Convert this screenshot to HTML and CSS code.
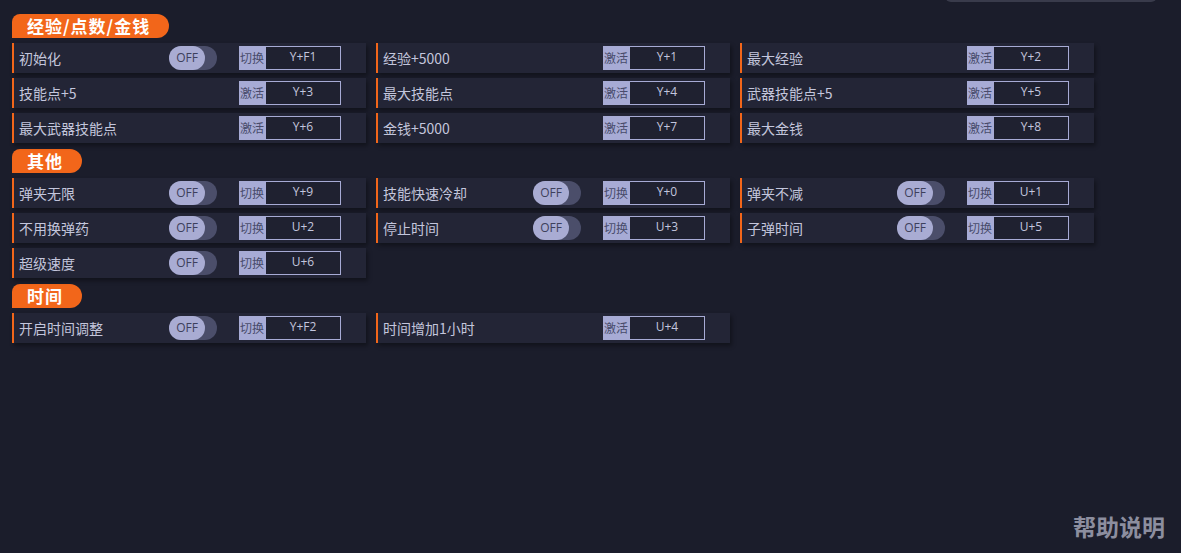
FILE: index.html
```html
<!DOCTYPE html>
<html lang="zh-CN">
<head>
  <meta charset="UTF-8" />
  <title>修改器</title>
  <link rel="stylesheet" href="styles.css">
</head>
<body>
  <div class="top-tab"></div>

  <div class="section">
    <div class="section-title">经验/点数/金钱</div>
    <div class="grid">
      <div class="row"><span class="name">初始化</span><span class="toggle"><span class="knob">OFF</span></span><span class="key"><span class="mode">切换</span><span class="hot">Y+F1</span></span></div>
      <div class="row"><span class="name">经验+5000</span><span class="key"><span class="mode">激活</span><span class="hot">Y+1</span></span></div>
      <div class="row"><span class="name">最大经验</span><span class="key"><span class="mode">激活</span><span class="hot">Y+2</span></span></div>
      <div class="row"><span class="name">技能点+5</span><span class="key"><span class="mode">激活</span><span class="hot">Y+3</span></span></div>
      <div class="row"><span class="name">最大技能点</span><span class="key"><span class="mode">激活</span><span class="hot">Y+4</span></span></div>
      <div class="row"><span class="name">武器技能点+5</span><span class="key"><span class="mode">激活</span><span class="hot">Y+5</span></span></div>
      <div class="row"><span class="name">最大武器技能点</span><span class="key"><span class="mode">激活</span><span class="hot">Y+6</span></span></div>
      <div class="row"><span class="name">金钱+5000</span><span class="key"><span class="mode">激活</span><span class="hot">Y+7</span></span></div>
      <div class="row"><span class="name">最大金钱</span><span class="key"><span class="mode">激活</span><span class="hot">Y+8</span></span></div>
    </div>
  </div>

  <div class="section">
    <div class="section-title">其他</div>
    <div class="grid">
      <div class="row"><span class="name">弹夹无限</span><span class="toggle"><span class="knob">OFF</span></span><span class="key"><span class="mode">切换</span><span class="hot">Y+9</span></span></div>
      <div class="row"><span class="name">技能快速冷却</span><span class="toggle"><span class="knob">OFF</span></span><span class="key"><span class="mode">切换</span><span class="hot">Y+0</span></span></div>
      <div class="row"><span class="name">弹夹不减</span><span class="toggle"><span class="knob">OFF</span></span><span class="key"><span class="mode">切换</span><span class="hot">U+1</span></span></div>
      <div class="row"><span class="name">不用换弹药</span><span class="toggle"><span class="knob">OFF</span></span><span class="key"><span class="mode">切换</span><span class="hot">U+2</span></span></div>
      <div class="row"><span class="name">停止时间</span><span class="toggle"><span class="knob">OFF</span></span><span class="key"><span class="mode">切换</span><span class="hot">U+3</span></span></div>
      <div class="row"><span class="name">子弹时间</span><span class="toggle"><span class="knob">OFF</span></span><span class="key"><span class="mode">切换</span><span class="hot">U+5</span></span></div>
      <div class="row"><span class="name">超级速度</span><span class="toggle"><span class="knob">OFF</span></span><span class="key"><span class="mode">切换</span><span class="hot">U+6</span></span></div>
    </div>
  </div>

  <div class="section">
    <div class="section-title">时间</div>
    <div class="grid">
      <div class="row"><span class="name">开启时间调整</span><span class="toggle"><span class="knob">OFF</span></span><span class="key"><span class="mode">切换</span><span class="hot">Y+F2</span></span></div>
      <div class="row"><span class="name">时间增加1小时</span><span class="key"><span class="mode">激活</span><span class="hot">U+4</span></span></div>
    </div>
  </div>

  <div class="help">帮助说明</div>
</body>
</html>
```

FILE: styles.css
```css
html, body {
  height: 100%;
}

body {
  margin: 0;
  padding: 14px 12px 0;
  box-sizing: border-box;
  background: #1b1d2b;
  color: #c3c6dc;
  font-family: "Noto Sans CJK SC", "Noto Sans", sans-serif;
  position: relative;
  overflow: hidden;
}

.top-tab {
  position: absolute;
  top: -6px;
  left: 945px;
  width: 212px;
  height: 8px;
  border-radius: 0 0 6px 6px;
  background: #393b4b;
}

.section {
  margin-bottom: 6px;
}

.section-title {
  width: fit-content;
  height: 24px;
  line-height: 24px;
  padding: 0 19px 0 15px;
  background: #f2661a;
  color: #ffffff;
  font-size: 17px;
  font-weight: bold;
  letter-spacing: 1px;
  border-radius: 8px 12px 12px 0;
  margin-bottom: 5px;
}

.grid {
  display: grid;
  grid-template-columns: repeat(3, 354px);
  column-gap: 10px;
  row-gap: 5px;
}

.row {
  display: flex;
  align-items: center;
  height: 30px;
  background: #232536;
  border-left: 2px solid #f2661a;
  box-shadow: 2px 3px 4px rgba(0, 0, 0, 0.35);
  padding-left: 5px;
}

.name {
  flex: 1;
  font-size: 14px;
  color: #c3c6dc;
}

.toggle {
  width: 48px;
  height: 24px;
  border-radius: 12px;
  background: #4b4e6a;
  margin-right: 22px;
  display: flex;
}

.knob {
  width: 36px;
  height: 24px;
  border-radius: 12px;
  background: #a9acd3;
  color: #3d405c;
  font-family: "Open Sans", "Noto Sans", sans-serif;
  font-size: 12px;
  line-height: 24px;
  text-align: center;
}

.key {
  display: flex;
  height: 24px;
  margin-right: 25px;
  font-size: 12px;
}

.mode {
  width: 26px;
  background: #a7abd5;
  color: #484b6b;
  line-height: 24px;
  text-align: center;
}

.hot {
  width: 76px;
  box-sizing: border-box;
  border: 1px solid #a7abd5;
  background: #1f2130;
  color: #c3c6de;
  font-family: "Open Sans", "Noto Sans", sans-serif;
  line-height: 20px;
  text-align: center;
}

.help {
  position: absolute;
  right: 16px;
  bottom: 10px;
  font-size: 23px;
  font-weight: bold;
  color: #8c8e9f;
}
```
